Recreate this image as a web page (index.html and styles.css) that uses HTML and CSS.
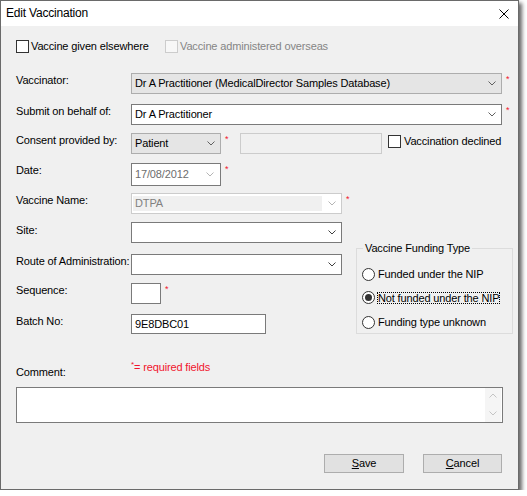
FILE: index.html
```html
<!DOCTYPE html>
<html>
<head>
<meta charset="utf-8">
<title>Edit Vaccination</title>
<link rel="stylesheet" href="styles.css">
</head>
<body>
<div class="window">
  <div class="titlebar">
    <span class="title">Edit Vaccination</span>
    <svg class="close" width="10" height="10" viewBox="0 0 10 10"><path d="M0.5 0.5L9.5 9.5M9.5 0.5L0.5 9.5" stroke="#000" stroke-width="1" fill="none"/></svg>
  </div>
  <div class="client">
    <div class="row checks">
      <label class="check first"><span class="box"></span><span>Vaccine given elsewhere</span></label>
      <label class="check disabled"><span class="box"></span><span>Vaccine administered overseas</span></label>
    </div>

    <div class="row r-vacc">
      <span class="lbl">Vaccinator:</span>
      <div class="combo grey w-full"><span class="txt">Dr A Practitioner (MedicalDirector Samples Database)</span><svg class="chev" width="8" height="5" viewBox="0 0 8 5"><path d="M0.5 0.5L4 4L7.5 0.5" fill="none" stroke="#606060"/></svg></div>
      <span class="req">*</span>
    </div>

    <div class="row r-submit">
      <span class="lbl">Submit on behalf of:</span>
      <div class="combo w-full"><span class="txt">Dr A Practitioner</span><svg class="chev" width="8" height="5" viewBox="0 0 8 5"><path d="M0.5 0.5L4 4L7.5 0.5" fill="none" stroke="#606060"/></svg></div>
      <span class="req">*</span>
    </div>

    <div class="row r-consent">
      <span class="lbl">Consent provided by:</span>
      <div class="combo grey w-short"><span class="txt">Patient</span><svg class="chev" width="8" height="5" viewBox="0 0 8 5"><path d="M0.5 0.5L4 4L7.5 0.5" fill="none" stroke="#606060"/></svg></div>
      <span class="req fixed">*</span>
      <div class="tb tb-disabled"></div>
      <label class="check declined"><span class="box"></span><span>Vaccination declined</span></label>
    </div>

    <div class="row r-date">
      <span class="lbl">Date:</span>
      <div class="combo date"><span class="txt">17/08/2012</span><svg class="chev" width="8" height="5" viewBox="0 0 8 5"><path d="M0.5 0.5L4 4L7.5 0.5" fill="none" stroke="#b4b4b4"/></svg></div>
      <span class="req">*</span>
    </div>

    <div class="row r-vname">
      <span class="lbl">Vaccine Name:</span>
      <div class="vname"><span class="vtxt">DTPA</span><span class="vbtn"><svg class="chev" width="8" height="5" viewBox="0 0 8 5"><path d="M0.5 0.5L4 4L7.5 0.5" fill="none" stroke="#b4b4b4"/></svg></span></div>
      <span class="req">*</span>
    </div>

    <div class="mid">
      <div class="leftcol">
        <div class="row r-site">
          <span class="lbl lbl-site">Site:</span>
          <div class="combo w-mid"><span class="txt"></span><svg class="chev" width="8" height="5" viewBox="0 0 8 5"><path d="M0.5 0.5L4 4L7.5 0.5" fill="none" stroke="#404040"/></svg></div>
        </div>
        <div class="row r-route">
          <span class="lbl">Route of Administration:</span>
          <div class="combo w-mid"><span class="txt"></span><svg class="chev" width="8" height="5" viewBox="0 0 8 5"><path d="M0.5 0.5L4 4L7.5 0.5" fill="none" stroke="#404040"/></svg></div>
        </div>
        <div class="row r-seq">
          <span class="lbl">Sequence:</span>
          <div class="tb tb-seq"></div>
          <span class="req">*</span>
        </div>
        <div class="row r-batch">
          <span class="lbl">Batch No:</span>
          <div class="tb tb-batch">9E8DBC01</div>
        </div>
      </div>
      <fieldset class="fund">
        <legend>Vaccine Funding Type</legend>
        <div class="radio r1"><span class="dot"></span><span>Funded under the NIP</span></div>
        <div class="radio r2"><span class="dot on"><span class="pip"></span></span><span class="focus">Not funded under the NIP</span></div>
        <div class="radio r3"><span class="dot"></span><span>Funding type unknown</span></div>
      </fieldset>
    </div>

    <div class="row r-comment">
      <span class="lbl lbl-comment">Comment:</span>
      <span class="rf"><span class="star">*</span>= required fields</span>
    </div>

    <div class="comment">
      <div class="scroll">
        <svg width="8" height="5" viewBox="0 0 8 5"><path d="M0.5 4.5L4 1L7.5 4.5" fill="none" stroke="#c4c4c4"/></svg>
        <svg width="8" height="5" viewBox="0 0 8 5"><path d="M0.5 0.5L4 4L7.5 0.5" fill="none" stroke="#c4c4c4"/></svg>
      </div>
    </div>

    <div class="buttons">
      <div class="btn btn-save"><span><u>S</u>ave</span></div>
      <div class="btn btn-cancel"><span><u>C</u>ancel</span></div>
    </div>
  </div>
</div>
</body>
</html>
```
FILE: styles.css
```css
* { box-sizing: border-box; }
html, body { margin: 0; background: #fff; }
body {
  font-family: "Liberation Sans", Arial, sans-serif;
  font-size: 11px;
  line-height: 13px;
  letter-spacing: -0.14px;
  color: #000;
}
.window {
  width: 519px;
  height: 490px;
  border: 1px solid #6a6a6a;
  display: flex;
  flex-direction: column;
  background: #f0f0f0;
  box-shadow: 3px 3px 4px rgba(0,0,0,0.6);
}
.titlebar {
  flex: none;
  height: 25px;
  background: #fff;
  display: flex;
  align-items: center;
  justify-content: space-between;
  padding: 0 9px 0 5px;
}
.title { font-size: 12px; letter-spacing: -0.2px; }
.close { display: block; }
.client { flex: 1; padding-left: 15px; }

.row { display: flex; align-items: flex-start; }
.lbl { width: 115px; flex: none; padding-top: 1px; white-space: nowrap; }

.check { display: flex; align-items: center; white-space: nowrap; }
.check .box {
  width: 13px; height: 13px; flex: none;
  border: 1px solid #333; background: #fff;
  margin-right: 2px;
}
.checks { margin-top: 14px; align-items: center; }
.check.first { width: 149px; }
.check.disabled { color: #858585; }
.check.disabled .box { border-color: #cccccc; background: #f7f7f7; }
.check.declined { margin: 2px 0 0 6px; }
.check.declined .box { margin-right: 3px; }

.combo {
  flex: none;
  height: 21px;
  border: 1px solid #7a7a7a;
  background: #fff;
  display: flex;
  align-items: center;
  padding: 0 5px 0 3px;
}
.combo .txt { flex: 1; white-space: nowrap; overflow: hidden; }
.combo.grey { background: #e5e5e5; border-color: #adadad; }
.chev { display: block; flex: none; }
.w-full { width: 371px; }
.w-short { width: 90px; }
.w-mid { width: 211px; }
.date { width: 90px; height: 23px; color: #6d6d6d; padding-right: 6px; }

.req {
  color: #f0142d;
  font-size: 9px;
  line-height: 9px;
  letter-spacing: 0;
  margin: 2px 0 0 4px;
}
.req.fixed { width: 19px; margin-left: 0; padding-left: 4px; }

.tb {
  flex: none;
  height: 21px;
  border: 1px solid #7a7a7a;
  background: #fff;
  padding-left: 3px;
  line-height: 18px;
}
.tb-disabled { width: 142px; border-color: #cccccc; background: #f0f0f0; }
.tb-seq { width: 30px; }
.tb-batch { width: 135px; height: 20px; }

.vname {
  flex: none;
  width: 211px;
  height: 21px;
  border: 1px solid #cccccc;
  background: #fff;
  padding: 2px 0 2px 1px;
  display: flex;
}
.vtxt {
  flex: 1;
  background: #f0f0f0;
  color: #808080;
  padding-left: 2px;
  line-height: 15px;
}
.vbtn { width: 19px; flex: none; display: flex; align-items: center; justify-content: center; }

.r-vacc { margin-top: 20px; }
.r-submit { margin-top: 10px; }
.r-consent { margin-top: 8px; }
.r-date { margin-top: 9px; }
.r-vname { margin-top: 7px; }

.mid { display: flex; align-items: flex-start; margin-top: 8px; }
.leftcol { width: 326px; flex: none; }
.lbl-site { padding-top: 2px; }
.r-route { margin-top: 11px; }
.r-seq { margin-top: 8px; }
.r-batch { margin-top: 10px; }

.fund {
  margin: 20px 0 0 14px;
  padding: 0 0 4px 5px;
  border: 1px solid #dcdcdc;
  width: 157px;
  min-width: 0;
}
.fund legend { padding: 0 2px; margin-left: 1px; line-height: 13px; }
.radio { display: flex; align-items: center; height: 13px; white-space: nowrap; }
.r1 { margin-top: 13px; }
.r2 { margin-top: 10px; }
.r3 { margin-top: 12px; }
.dot {
  width: 13px; height: 13px; flex: none;
  border: 1px solid #333; border-radius: 50%;
  background: #fff;
  margin-right: 3px;
  display: flex; align-items: center; justify-content: center;
}
.pip { width: 7px; height: 7px; border-radius: 50%; background: #333; }
.focus {
  border: 1px dotted #000;
  margin-left: -1px;
  line-height: 10px;
  height: 12px;
}

.r-comment { margin-top: 27px; }
.lbl-comment { padding-top: 5px; }
.rf { color: #f0142d; }
.rf .star { font-size: 8px; vertical-align: top; line-height: 8px; }

.comment {
  margin-top: 8px;
  width: 487px;
  height: 36px;
  border: 1px solid #7a7a7a;
  background: #fff;
  display: flex;
  justify-content: flex-end;
  padding-right: 1px;
}
.scroll {
  width: 16px;
  background: #f5f5f5;
  display: flex;
  flex-direction: column;
  align-items: center;
  justify-content: space-between;
  padding: 5px 0 6px;
}
.scroll svg { display: block; }

.buttons {
  margin-top: 31px;
  display: flex;
  justify-content: flex-end;
  gap: 19px;
  padding-right: 16px;
}
.btn {
  height: 19px;
  border: 1px solid #adadad;
  background: #e1e1e1;
  display: flex;
  align-items: center;
  justify-content: center;
}
.btn-save { width: 80px; }
.btn-cancel { width: 79px; }
```
